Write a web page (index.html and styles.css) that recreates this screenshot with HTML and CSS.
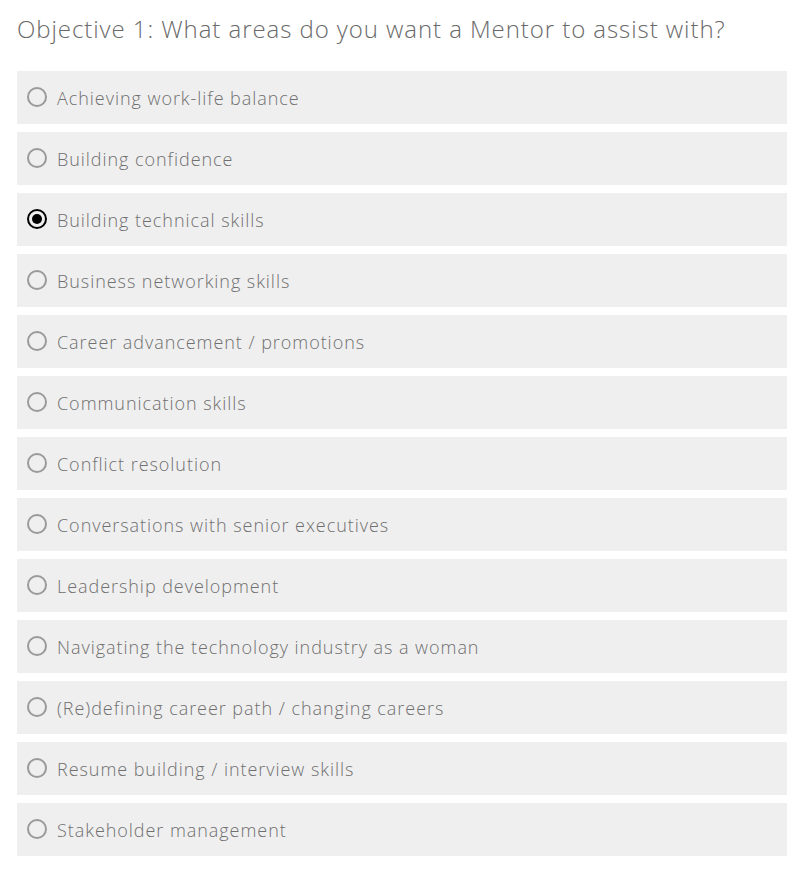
FILE: index.html
```html
<!DOCTYPE html>
<html lang="en">
<head>
<meta charset="utf-8">
<title>Objective 1</title>
<link rel="stylesheet" href="styles.css">
</head>
<body>
<div class="question">
  <h2 class="title">Objective 1: What areas do you want a Mentor to assist with?</h2>
  <div class="options">
    <label class="option"><span class="radio"></span><span class="label">Achieving work-life balance</span></label>
    <label class="option"><span class="radio"></span><span class="label">Building confidence</span></label>
    <label class="option"><span class="radio checked"></span><span class="label">Building technical skills</span></label>
    <label class="option"><span class="radio"></span><span class="label">Business networking skills</span></label>
    <label class="option"><span class="radio"></span><span class="label">Career advancement / promotions</span></label>
    <label class="option"><span class="radio"></span><span class="label">Communication skills</span></label>
    <label class="option"><span class="radio"></span><span class="label">Conflict resolution</span></label>
    <label class="option"><span class="radio"></span><span class="label">Conversations with senior executives</span></label>
    <label class="option"><span class="radio"></span><span class="label">Leadership development</span></label>
    <label class="option"><span class="radio"></span><span class="label">Navigating the technology industry as a woman</span></label>
    <label class="option"><span class="radio"></span><span class="label">(Re)defining career path / changing careers</span></label>
    <label class="option"><span class="radio"></span><span class="label">Resume building / interview skills</span></label>
    <label class="option"><span class="radio"></span><span class="label">Stakeholder management</span></label>
  </div>
</div>
</body>
</html>
```
FILE: styles.css
```css
html, body {
  margin: 0;
  padding: 0;
  background: #ffffff;
}
body {
  font-family: "Open Sans", "Liberation Sans", sans-serif;
  color: #777777;
}
.question {
  padding: 14px 18px 0 17px;
}
.title {
  margin: 0;
  font-weight: 300;
  font-size: 24px;
  line-height: 30px;
  letter-spacing: 0.93px;
  color: #6a6a6a;
}
.options {
  display: flex;
  flex-direction: column;
  gap: 8px;
  margin-top: 27px;
}
.option {
  display: flex;
  align-items: center;
  height: 53px;
  background: #efefef;
  padding-left: 10px;
  gap: 10px;
  box-sizing: border-box;
}
.radio {
  width: 20px;
  height: 20px;
  box-sizing: border-box;
  border: 2px solid #9a9a9a;
  border-radius: 50%;
  flex: none;
  display: flex;
  align-items: center;
  justify-content: center;
  margin-top: -1px;
}
.radio.checked {
  border-color: #000;
}
.radio.checked::after {
  content: "";
  width: 10px;
  height: 10px;
  border-radius: 50%;
  background: #000;
}
.label {
  font-size: 18px;
  font-weight: 300;
  line-height: 24px;
  letter-spacing: 0.95px;
  padding-top: 0;
  color: #707070;
}
```
